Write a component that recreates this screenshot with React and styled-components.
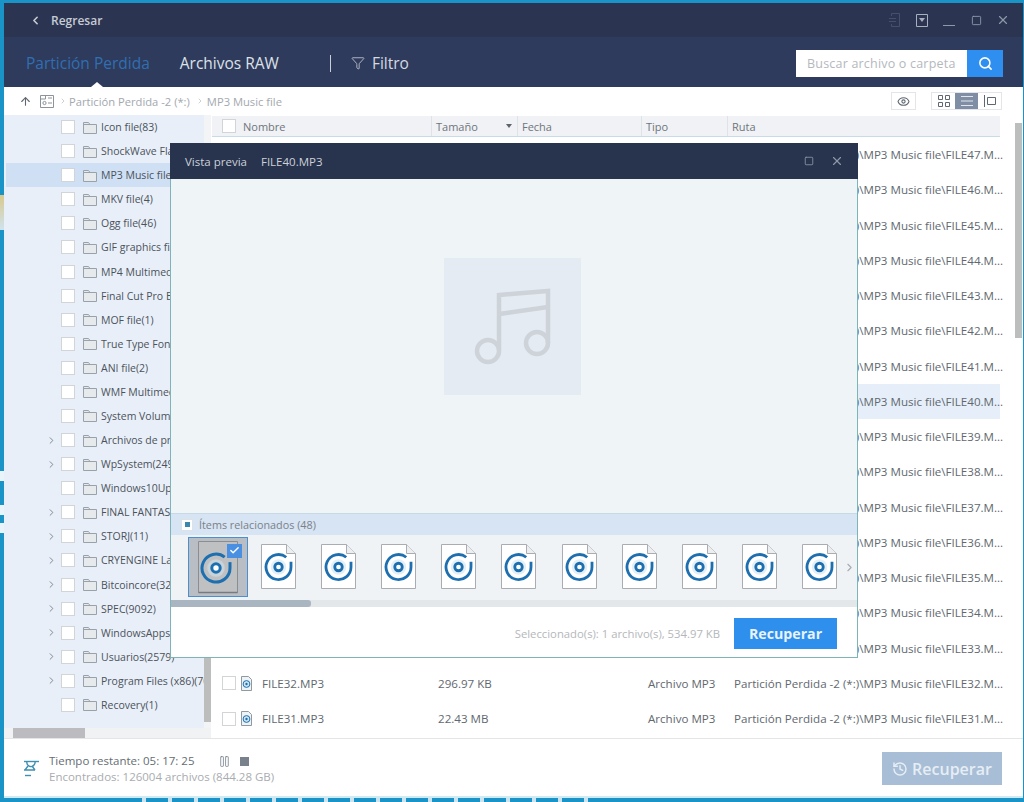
import styled, { createGlobalStyle } from "styled-components";
import { ChevronLeft, ChevronRight, ArrowUp, Search, Eye, History, X, Square, Funnel, Pause, Check } from "lucide-react";

const FONT = `"Open Sans", "Noto Sans", "Liberation Sans", sans-serif`;

const GlobalStyle = createGlobalStyle`
  html, body { margin: 0; padding: 0; }
  body { font-family: ${FONT}; }
  * { box-sizing: border-box; }
`;

// Desktop behind the window
const Page = styled.div`
  width: 1024px;
  height: 802px;
  overflow: hidden;
  padding: 3px 1px 4px 4px;
  background:
    linear-gradient(
        transparent 195px, #d9c98c 195px, #cfe3ee 230px, transparent 230px,
        transparent 471px, #e8f4f9 471px, #e8f4f9 481px, transparent 481px,
        transparent 505px, #e8f4f9 505px, #e8f4f9 515px, transparent 515px,
        transparent 523px, #e8f4f9 523px, #e8f4f9 533px, transparent 533px
      ) no-repeat left top / 4px 100%,
    repeating-linear-gradient(90deg, transparent 0 22px, #cbe4f0 22px 26px) no-repeat 120px bottom / 490px 4px,
    #1a93c6;
`;

const Window = styled.div`
  position: relative;
  display: flex;
  flex-direction: column;
  height: 100%;
  background: #fff;
`;

// Top bar
const TopBar = styled.div`
  height: 34px;
  flex: none;
  display: flex;
  align-items: center;
  justify-content: space-between;
  padding: 0 13px 0 25px;
  background: #2b3551;
`;

const BackLink = styled.div`
  display: flex;
  align-items: center;
  gap: 9px;
  color: #c6cbd4;
  font-size: 12px;
  font-weight: 600;
`;

const WinControls = styled.div`
  display: flex;
  align-items: center;
  gap: 13px;
  color: #8f98a8;
`;

const WinIcon = styled.span`
  display: flex;
  width: 14px;
  height: 14px;
  align-items: center;
  justify-content: center;
`;

// Tab bar
const TabBar = styled.div`
  height: 50px;
  flex: none;
  position: relative;
  display: flex;
  align-items: center;
  padding: 2px 20px 0 22px;
  background: #2f3b5c;
`;

const Tab = styled.div`
  font-size: 15.5px;
  color: ${(p) => (p.$active ? "#2f6fb2" : "#dde1e8")};
  margin-right: ${(p) => p.$gap}px;
`;

const TabNotch = styled.div`
  position: absolute;
  left: 87px;
  bottom: 0;
  width: 0;
  height: 0;
  border-left: 6px solid transparent;
  border-right: 6px solid transparent;
  border-bottom: 5px solid #fff;
`;

const TabDivider = styled.div`
  width: 1px;
  height: 17px;
  background: #c9ced8;
  margin-right: 20px;
`;

const FilterButton = styled.div`
  display: flex;
  align-items: center;
  gap: 7px;
  font-size: 15.5px;
  color: #d5d9e1;
`;

const SearchBox = styled.div`
  margin-left: auto;
  display: flex;
  width: 207px;
  height: 27px;
`;

const SearchField = styled.div`
  flex: 1;
  background: #fff;
  color: #b4b8bd;
  font-size: 12.5px;
  line-height: 27px;
  padding-left: 11px;
  letter-spacing: 0.2px;
`;

const SearchButton = styled.div`
  width: 36px;
  background: #2f8ff0;
  color: #fff;
  display: flex;
  align-items: center;
  justify-content: center;
`;

// Breadcrumb row
const CrumbBar = styled.div`
  height: 28px;
  flex: none;
  display: flex;
  align-items: center;
  padding: 0 21px 0 15px;
  background: #fff;
  color: #a3a8ae;
  font-size: 11.2px;
`;

const Crumb = styled.span`
  display: flex;
  margin-left: ${(p) => p.$gap || 0}px;
`;

const CrumbSep = styled.span`
  margin-left: ${(p) => p.$gap || 5}px;
  display: flex;
  color: #b5b9be;
`;

const ViewTools = styled.div`
  margin-left: auto;
  display: flex;
  align-items: center;
  gap: 15px;
`;

const ToolGroup = styled.div`
  display: flex;
  height: 18px;
  border: 1px solid #e3e5e8;
`;

const ToolCell = styled.div`
  width: 23px;
  display: flex;
  align-items: center;
  justify-content: center;
  background: ${(p) => (p.$on ? "#7f8ea5" : "#fff")};
  color: #5f6770;
`;

// Body
const Body = styled.div`
  flex: 1;
  min-height: 0;
  display: flex;
`;

const Sidebar = styled.div`
  width: 207px;
  flex: none;
  display: flex;
  flex-direction: column;
  background: #e8eff9;
`;

const TreeArea = styled.div`
  flex: 1;
  min-height: 0;
  display: flex;
`;

const Tree = styled.div`
  flex: 1;
  min-width: 0;
  overflow: hidden;
`;

const TreeRow = styled.div`
  height: 24.08px;
  display: flex;
  align-items: center;
  white-space: nowrap;
  padding-left: 40px;
  margin-left: 2px;
  font-size: 10.5px;
  color: #4c5259;
  background: ${(p) => (p.$selected ? "#cfe0f5" : "transparent")};
`;

const Caret = styled.span`
  width: 15px;
  flex: none;
  display: flex;
  color: #7b8087;
`;

const Box = styled.span`
  flex: none;
  display: block;
  width: 14px;
  height: 14px;
  background: #fff;
  border: 1px solid #d2d5d8;
`;

const FolderWrap = styled.span`
  flex: none;
  display: flex;
  margin: 0 4px 0 8px;
`;

const VRail = styled.div`
  width: 7px;
  flex: none;
  display: flex;
  flex-direction: column;
  justify-content: flex-end;
  background: #f2f4f6;
`;

const VThumb = styled.div`
  width: 100%;
  height: 120px;
  margin-bottom: 6px;
  background: #bcbdbd;
`;

const HRail = styled.div`
  height: 10px;
  flex: none;
  display: flex;
  align-items: stretch;
  padding-left: 9px;
  background: #f1f2f3;
`;

const HThumb = styled.div`
  width: 72px;
  background: #bcbcc0;
`;

// File list
const Main = styled.div`
  flex: 1;
  min-width: 0;
  display: flex;
  padding-left: 1px;
`;

const ListColumn = styled.div`
  width: 788px;
  flex: none;
`;

const COLUMNS = "219px 86px 124px 86px 273px";

const HeaderRow = styled.div`
  height: 21px;
  margin-top: 1px;
  display: grid;
  grid-template-columns: ${COLUMNS};
  background: #f0f2f5;
  border-bottom: 1px solid #c8dbe8;
  color: #6f757c;
  font-size: 11px;
`;

const HeaderCell = styled.div`
  display: flex;
  align-items: center;
  gap: 6px;
  padding-left: ${(p) => p.$pad || 4}px;
  border-left: ${(p) => (p.$first ? "none" : "1px solid #dfe2e6")};
  position: relative;
`;

const SortMark = styled.span`
  position: absolute;
  right: 5px;
  top: 8px;
  border-left: 3.5px solid transparent;
  border-right: 3.5px solid transparent;
  border-top: 4px solid #5d646c;
`;

const FileRow = styled.div`
  height: 35.25px;
  display: grid;
  grid-template-columns: ${COLUMNS};
  align-items: center;
  color: #62686f;
  font-size: 11.6px;
  white-space: nowrap;
  background: ${(p) => (p.$selected ? "#e6eff9" : "transparent")};
`;

const FileName = styled.div`
  display: flex;
  align-items: center;
  padding-left: 10px;
`;

const FileIcon = styled.span`
  display: flex;
  margin: 0 10px 0 5px;
`;

const Cell = styled.div`
  padding-left: 7px;
`;

const ScrollRail = styled.div`
  width: 7px;
  margin-left: 15px;
  flex: none;
  padding-top: 8px;
`;

const ScrollThumb = styled.div`
  height: 215px;
  background: #bcbdbd;
`;

// Footer
const Footer = styled.div`
  height: 60px;
  flex: none;
  display: flex;
  align-items: center;
  padding: 0 21px 0 20px;
  border-top: 1px solid #e4e5e6;
  border-bottom: 2px solid #cdeaf5;
`;

const Status = styled.div`
  margin-left: 9px;
  width: 169px;
  padding-top: 3px;
`;

const StatusMain = styled.div`
  font-size: 11.5px;
  color: #666c73;
  white-space: nowrap;
  line-height: 16px;
`;

const StatusSub = styled.div`
  font-size: 11.5px;
  color: #a9acb0;
  white-space: nowrap;
  line-height: 16px;
`;

const Controls = styled.div`
  display: flex;
  align-items: center;
  gap: 9px;
  color: #78818c;
  margin-top: -12px;
`;

const StopMark = styled.div`
  width: 9px;
  height: 9px;
  background: #78818c;
`;

const BigButton = styled.div`
  margin-left: auto;
  width: 120px;
  height: 33px;
  margin-top: 2px;
  display: flex;
  align-items: center;
  justify-content: center;
  gap: 4px;
  background: #a7bed6;
  color: #e6edf4;
  font-size: 16px;
  font-weight: 600;
`;

// Preview dialog
const Modal = styled.div`
  position: absolute;
  left: 166px;
  top: 140px;
  width: 688px;
  height: 515px;
  display: flex;
  flex-direction: column;
  background: #fff;
  border: 1px solid #7db4b8;
  border-top: none;
`;

const ModalTitle = styled.div`
  height: 36px;
  flex: none;
  display: flex;
  align-items: center;
  padding: 0 14px 0 15px;
  margin: 0 -1px;
  background: #28334e;
  color: #ccd1d9;
  font-size: 11.5px;
`;

const TitleName = styled.span`
  margin-left: 14px;
`;

const TitleTools = styled.div`
  margin-left: auto;
  display: flex;
  align-items: center;
  gap: 16px;
  color: #8f98a8;
`;

const PreviewPane = styled.div`
  flex: 1;
  min-height: 0;
  display: flex;
  align-items: center;
  justify-content: center;
  background: #eff5f7;
  border-bottom: 1px solid #c7d9e6;
`;

const MusicTile = styled.div`
  width: 137px;
  height: 137px;
  margin: 0 4px 40px 0;
  background: #e4ebf3;
`;

const RelatedBar = styled.div`
  height: 21px;
  flex: none;
  display: flex;
  align-items: center;
  gap: 6px;
  padding-left: 10px;
  background: #d6e4f3;
  color: #7b8189;
  font-size: 10.8px;
`;

const TriBox = styled.span`
  width: 12px;
  height: 12px;
  display: flex;
  align-items: center;
  justify-content: center;
  background: #fff;
  border: 1px solid #dbe2e8;
`;

const TriMark = styled.span`
  width: 5px;
  height: 5px;
  background: #3d86ae;
`;

const ThumbStrip = styled.div`
  height: 65px;
  flex: none;
  display: flex;
  align-items: center;
  padding-left: 17px;
  background: #f0f3f6;
`;

const Thumb = styled.div`
  position: relative;
  width: ${(p) => (p.$selected ? 60 : 60.2)}px;
  height: 60px;
  flex: none;
  margin-top: -2px;
  display: flex;
  align-items: center;
  justify-content: center;
  background: ${(p) => (p.$selected ? "#b9bec5" : "transparent")};
  border: ${(p) => (p.$selected ? "1px solid #4a8fcf" : "none")};
`;

const CheckBadge = styled.span`
  position: absolute;
  right: 5px;
  top: 6px;
  width: 15px;
  height: 14px;
  display: flex;
  align-items: center;
  justify-content: center;
  background: #4a90e2;
  color: #fff;
`;

const StripNext = styled.span`
  display: flex;
  margin-left: -7px;
  color: #a5abb1;
`;

const StripScroll = styled.div`
  height: 7px;
  flex: none;
  background: #e4e7ea;
`;

const StripThumb = styled.div`
  width: 140px;
  height: 100%;
  border-radius: 0 3px 3px 0;
  background: #a9b5c0;
`;

const ModalFooter = styled.div`
  height: 50px;
  flex: none;
  display: flex;
  align-items: center;
  justify-content: flex-end;
  gap: 14px;
  padding: 2px 20px 0 0;
  color: #b4b7ba;
  font-size: 11.3px;
`;

const RecoverButton = styled.div`
  width: 103px;
  height: 31px;
  display: flex;
  align-items: center;
  justify-content: center;
  background: #2f8fec;
  color: #e9f3fd;
  font-size: 14.2px;
  font-weight: 700;
`;

// Drawn icons
function FolderIcon() {
  return (
    <svg width="14" height="13" viewBox="0 0 14 13">
      <path d="M.5 12.5V1.5h5l1.5 2h6.5v9z" fill="#e7eaed" stroke="#9aa2a9" />
      <path d="M.5 3.5h6.5" stroke="#9aa2a9" fill="none" />
    </svg>
  );
}

function DiscMark({ cx, cy, r, w, tint }) {
  return (
    <g fill="none">
      <circle cx={cx} cy={cy} r={r * 0.62} fill={tint} />
      <circle cx={cx} cy={cy} r={r * 0.3} fill="#fff" stroke="#1d6fb0" strokeWidth={w} />
      <path
        d={`M${cx + r * 0.62} ${cy - r * 0.78} A${r} ${r} 0 1 0 ${cx + r} ${cy}`}
        stroke="#1d6fb0"
        strokeWidth={w}
      />
      <path d={`M${cx + r} ${cy} V${cy - r * 0.42}`} stroke="#1d6fb0" strokeWidth={w} />
    </g>
  );
}

function DiscFile({ selected }) {
  if (selected) {
    return (
      <svg width="42" height="54" viewBox="0 0 42 54">
        <path d="M1.5 1.5h39v51h-39z" fill="#bfc0c2" stroke="#8a8d91" />
        <path d="M1.5 52.5h39" stroke="#777b80" strokeWidth="1.5" />
        <DiscMark cx={19} cy={28} r={14} w={3} tint="#c9d4da" />
      </svg>
    );
  }
  return (
    <svg width="35" height="45" viewBox="0 0 35 45">
      <path d="M.5.5h25l9 9v35H.5z" fill="#fff" stroke="#a9adb1" />
      <path d="M25.5.5v9h9" fill="#eceef0" stroke="#a9adb1" />
      <DiscMark cx={17.5} cy={23} r={12.5} w={2.8} tint="#e2f0f8" />
    </svg>
  );
}

function SmallDiscFile() {
  return (
    <svg width="11" height="15" viewBox="0 0 11 15">
      <path d="M.5.5h7l3 3v11H.5z" fill="#eef3f6" stroke="#8f99a1" />
      <circle cx="5.5" cy="8" r="3.4" fill="#cfe6f2" stroke="#1d6fb0" />
      <circle cx="5.5" cy="8" r="1.2" fill="#1d6fb0" />
    </svg>
  );
}

function MusicNote() {
  return (
    <svg width="137" height="137" viewBox="0 0 137 137" fill="none" stroke="#cdd3d9" strokeWidth="4.5">
      <path d="M55 92V37L104 33V85" />
      <path d="M55 56L104 49" />
      <circle cx="44" cy="93" r="11" />
      <circle cx="93" cy="85" r="11" />
    </svg>
  );
}

function DriveIcon() {
  return (
    <svg width="14" height="13" viewBox="0 0 14 13" fill="none" stroke="#8d9399">
      <path d="M.5.5h13v12H.5z" />
      <path d="M.5 4h5V.5" />
      <circle cx="4.5" cy="8" r="1.6" />
      <path d="M8 3h4M8 8h4" />
    </svg>
  );
}

function GridIcon() {
  return (
    <svg width="12" height="12" viewBox="0 0 12 12" fill="none" stroke="#5f6770">
      <path d="M.5.5h4v4h-4zM7.5.5h4v4h-4zM.5 7.5h4v4h-4zM7.5 7.5h4v4h-4z" />
    </svg>
  );
}

function ListIcon() {
  return (
    <svg width="12" height="12" viewBox="0 0 12 12" stroke="#e2e6ec">
      <path d="M0 1.5h12M0 6h12M0 10.5h12" />
    </svg>
  );
}

function PanelIcon() {
  return (
    <svg width="12" height="12" viewBox="0 0 12 12" fill="none" stroke="#5f6770">
      <path d="M.5 0v12M3.5 2.5h8v7h-8z" />
    </svg>
  );
}

function ExportIcon() {
  return (
    <svg width="13" height="14" viewBox="0 0 13 14" fill="none" stroke="#46506a">
      <path d="M2.5 3V.5h8v13h-8V11M0 5.5h7M0 8.5h7" />
    </svg>
  );
}

function DownBoxIcon() {
  return (
    <svg width="12" height="13" viewBox="0 0 12 13" fill="none" stroke="#a9b0bd">
      <path d="M.5.5h11v12H.5z" />
      <path d="M3 4h6L6 8z" fill="#a9b0bd" stroke="none" />
    </svg>
  );
}

function MinimizeIcon() {
  return (
    <svg width="12" height="14" viewBox="0 0 12 14" stroke="#8f98a8">
      <path d="M0 12.5h12" />
    </svg>
  );
}

function ScanIcon() {
  return (
    <svg width="16" height="18" viewBox="0 0 16 18" fill="none" stroke="#3f8fb3" strokeWidth="1.4">
      <path d="M0 2.5h15" />
      <path d="M3 2.5a4 4 0 0 0 7 3.5 4 4 0 0 0 1-3.5" />
      <path d="M1 11l3-4M11 11L8 7M0 11h11" />
      <path d="M1 16.5h6" />
    </svg>
  );
}

const treeItems = [
  { name: "Icon file(83)" },
  { name: "ShockWave Flash file(5)" },
  { name: "MP3 Music file(48)", selected: true },
  { name: "MKV file(4)" },
  { name: "Ogg file(46)" },
  { name: "GIF graphics file(7)" },
  { name: "MP4 Multimedia(12)" },
  { name: "Final Cut Pro Events" },
  { name: "MOF file(1)" },
  { name: "True Type Font(9)" },
  { name: "ANI file(2)" },
  { name: "WMF Multimedia(3)" },
  { name: "System Volume Information" },
  { name: "Archivos de programa", caret: true },
  { name: "WpSystem(249)", caret: true },
  { name: "Windows10Upgrade" },
  { name: "FINAL FANTASY XV", caret: true },
  { name: "STORJ(11)", caret: true },
  { name: "CRYENGINE Launcher", caret: true },
  { name: "Bitcoincore(324)", caret: true },
  { name: "SPEC(9092)", caret: true },
  { name: "WindowsApps(61)", caret: true },
  { name: "Usuarios(2579)", caret: true },
  { name: "Program Files (x86)(709)", caret: true },
  { name: "Recovery(1)" },
];

const fileRows = [];
for (let n = 47; n >= 31; n--) {
  fileRows.push({
    name: `FILE${n}.MP3`,
    size: n === 32 ? "296.97 KB" : n === 31 ? "22.43 MB" : "534.97 KB",
    path: `Partición Perdida -2 (*:)\\MP3 Music file\\FILE${n}.M...`,
  });
}

const thumbs = [0, 1, 2, 3, 4, 5, 6, 7, 8, 9];

export default function App() {
  return (
    <Page>
      <GlobalStyle />
      <Window>
        <TopBar>
          <BackLink>
            <ChevronLeft size={13} strokeWidth={3} />
            Regresar
          </BackLink>
          <WinControls>
            <WinIcon><ExportIcon /></WinIcon>
            <WinIcon><DownBoxIcon /></WinIcon>
            <WinIcon><MinimizeIcon /></WinIcon>
            <WinIcon><Square size={11} /></WinIcon>
            <WinIcon><X size={14} /></WinIcon>
          </WinControls>
        </TopBar>

        <TabBar>
          <Tab $active $gap={30}>Partición Perdida</Tab>
          <Tab $gap={51}>Archivos RAW</Tab>
          <TabDivider />
          <FilterButton>
            <Funnel size={14} strokeWidth={1.3} />
            Filtro
          </FilterButton>
          <TabNotch />
          <SearchBox>
            <SearchField>Buscar archivo o carpeta</SearchField>
            <SearchButton><Search size={15} strokeWidth={2.5} /></SearchButton>
          </SearchBox>
        </TabBar>

        <CrumbBar>
          <ArrowUp size={13} color="#60666d" />
          <Crumb $gap={8}><DriveIcon /></Crumb>
          <CrumbSep><ChevronRight size={8} /></CrumbSep>
          <Crumb $gap={2}>Partición Perdida -2 (*:)</Crumb>
          <CrumbSep $gap={6}><ChevronRight size={8} /></CrumbSep>
          <Crumb $gap={3}>MP3 Music file</Crumb>
          <ViewTools>
            <ToolGroup>
              <ToolCell><Eye size={13} color="#5f6770" /></ToolCell>
            </ToolGroup>
            <ToolGroup>
              <ToolCell><GridIcon /></ToolCell>
              <ToolCell $on><ListIcon /></ToolCell>
              <ToolCell><PanelIcon /></ToolCell>
            </ToolGroup>
          </ViewTools>
        </CrumbBar>

        <Body>
          <Sidebar>
            <TreeArea>
              <Tree>
                {treeItems.map((item) => (
                  <TreeRow key={item.name} $selected={item.selected}>
                    <Caret>{item.caret && <ChevronRight size={11} strokeWidth={2} />}</Caret>
                    <Box />
                    <FolderWrap><FolderIcon /></FolderWrap>
                    {item.name}
                  </TreeRow>
                ))}
              </Tree>
              <VRail>
                <VThumb />
              </VRail>
            </TreeArea>
            <HRail>
              <HThumb />
            </HRail>
          </Sidebar>

          <Main>
            <ListColumn>
              <HeaderRow>
                <HeaderCell $first $pad={10}>
                  <Box />
                  <Crumb $gap={1}>Nombre</Crumb>
                </HeaderCell>
                <HeaderCell>Tamaño<SortMark /></HeaderCell>
                <HeaderCell>Fecha</HeaderCell>
                <HeaderCell>Tipo</HeaderCell>
                <HeaderCell>Ruta</HeaderCell>
              </HeaderRow>
              {fileRows.map((row) => (
                <FileRow key={row.name} $selected={row.name === "FILE40.MP3"}>
                  <FileName>
                    <Box />
                    <FileIcon><SmallDiscFile /></FileIcon>
                    {row.name}
                  </FileName>
                  <Cell>{row.size}</Cell>
                  <Cell />
                  <Cell>Archivo MP3</Cell>
                  <Cell>{row.path}</Cell>
                </FileRow>
              ))}
            </ListColumn>
            <ScrollRail>
              <ScrollThumb />
            </ScrollRail>
          </Main>
        </Body>

        <Footer>
          <ScanIcon />
          <Status>
            <StatusMain>Tiempo restante: 05: 17: 25</StatusMain>
            <StatusSub>Encontrados: 126004 archivos (844.28 GB)</StatusSub>
          </Status>
          <Controls>
            <Pause size={13} strokeWidth={1.5} />
            <StopMark />
          </Controls>
          <BigButton>
            <History size={16} strokeWidth={2.2} />
            Recuperar
          </BigButton>
        </Footer>

        <Modal>
          <ModalTitle>
            Vista previa
            <TitleName>FILE40.MP3</TitleName>
            <TitleTools>
              <Square size={10} />
              <X size={14} />
            </TitleTools>
          </ModalTitle>
          <PreviewPane>
            <MusicTile><MusicNote /></MusicTile>
          </PreviewPane>
          <RelatedBar>
            <TriBox><TriMark /></TriBox>
            Ítems relacionados (48)
          </RelatedBar>
          <ThumbStrip>
            <Thumb $selected>
              <DiscFile selected />
              <CheckBadge><Check size={11} strokeWidth={3} /></CheckBadge>
            </Thumb>
            {thumbs.map((t) => (
              <Thumb key={t}><DiscFile /></Thumb>
            ))}
            <StripNext><ChevronRight size={13} /></StripNext>
          </ThumbStrip>
          <StripScroll><StripThumb /></StripScroll>
          <ModalFooter>
            Seleccionado(s): 1 archivo(s), 534.97 KB
            <RecoverButton>Recuperar</RecoverButton>
          </ModalFooter>
        </Modal>
      </Window>
    </Page>
  );
}
